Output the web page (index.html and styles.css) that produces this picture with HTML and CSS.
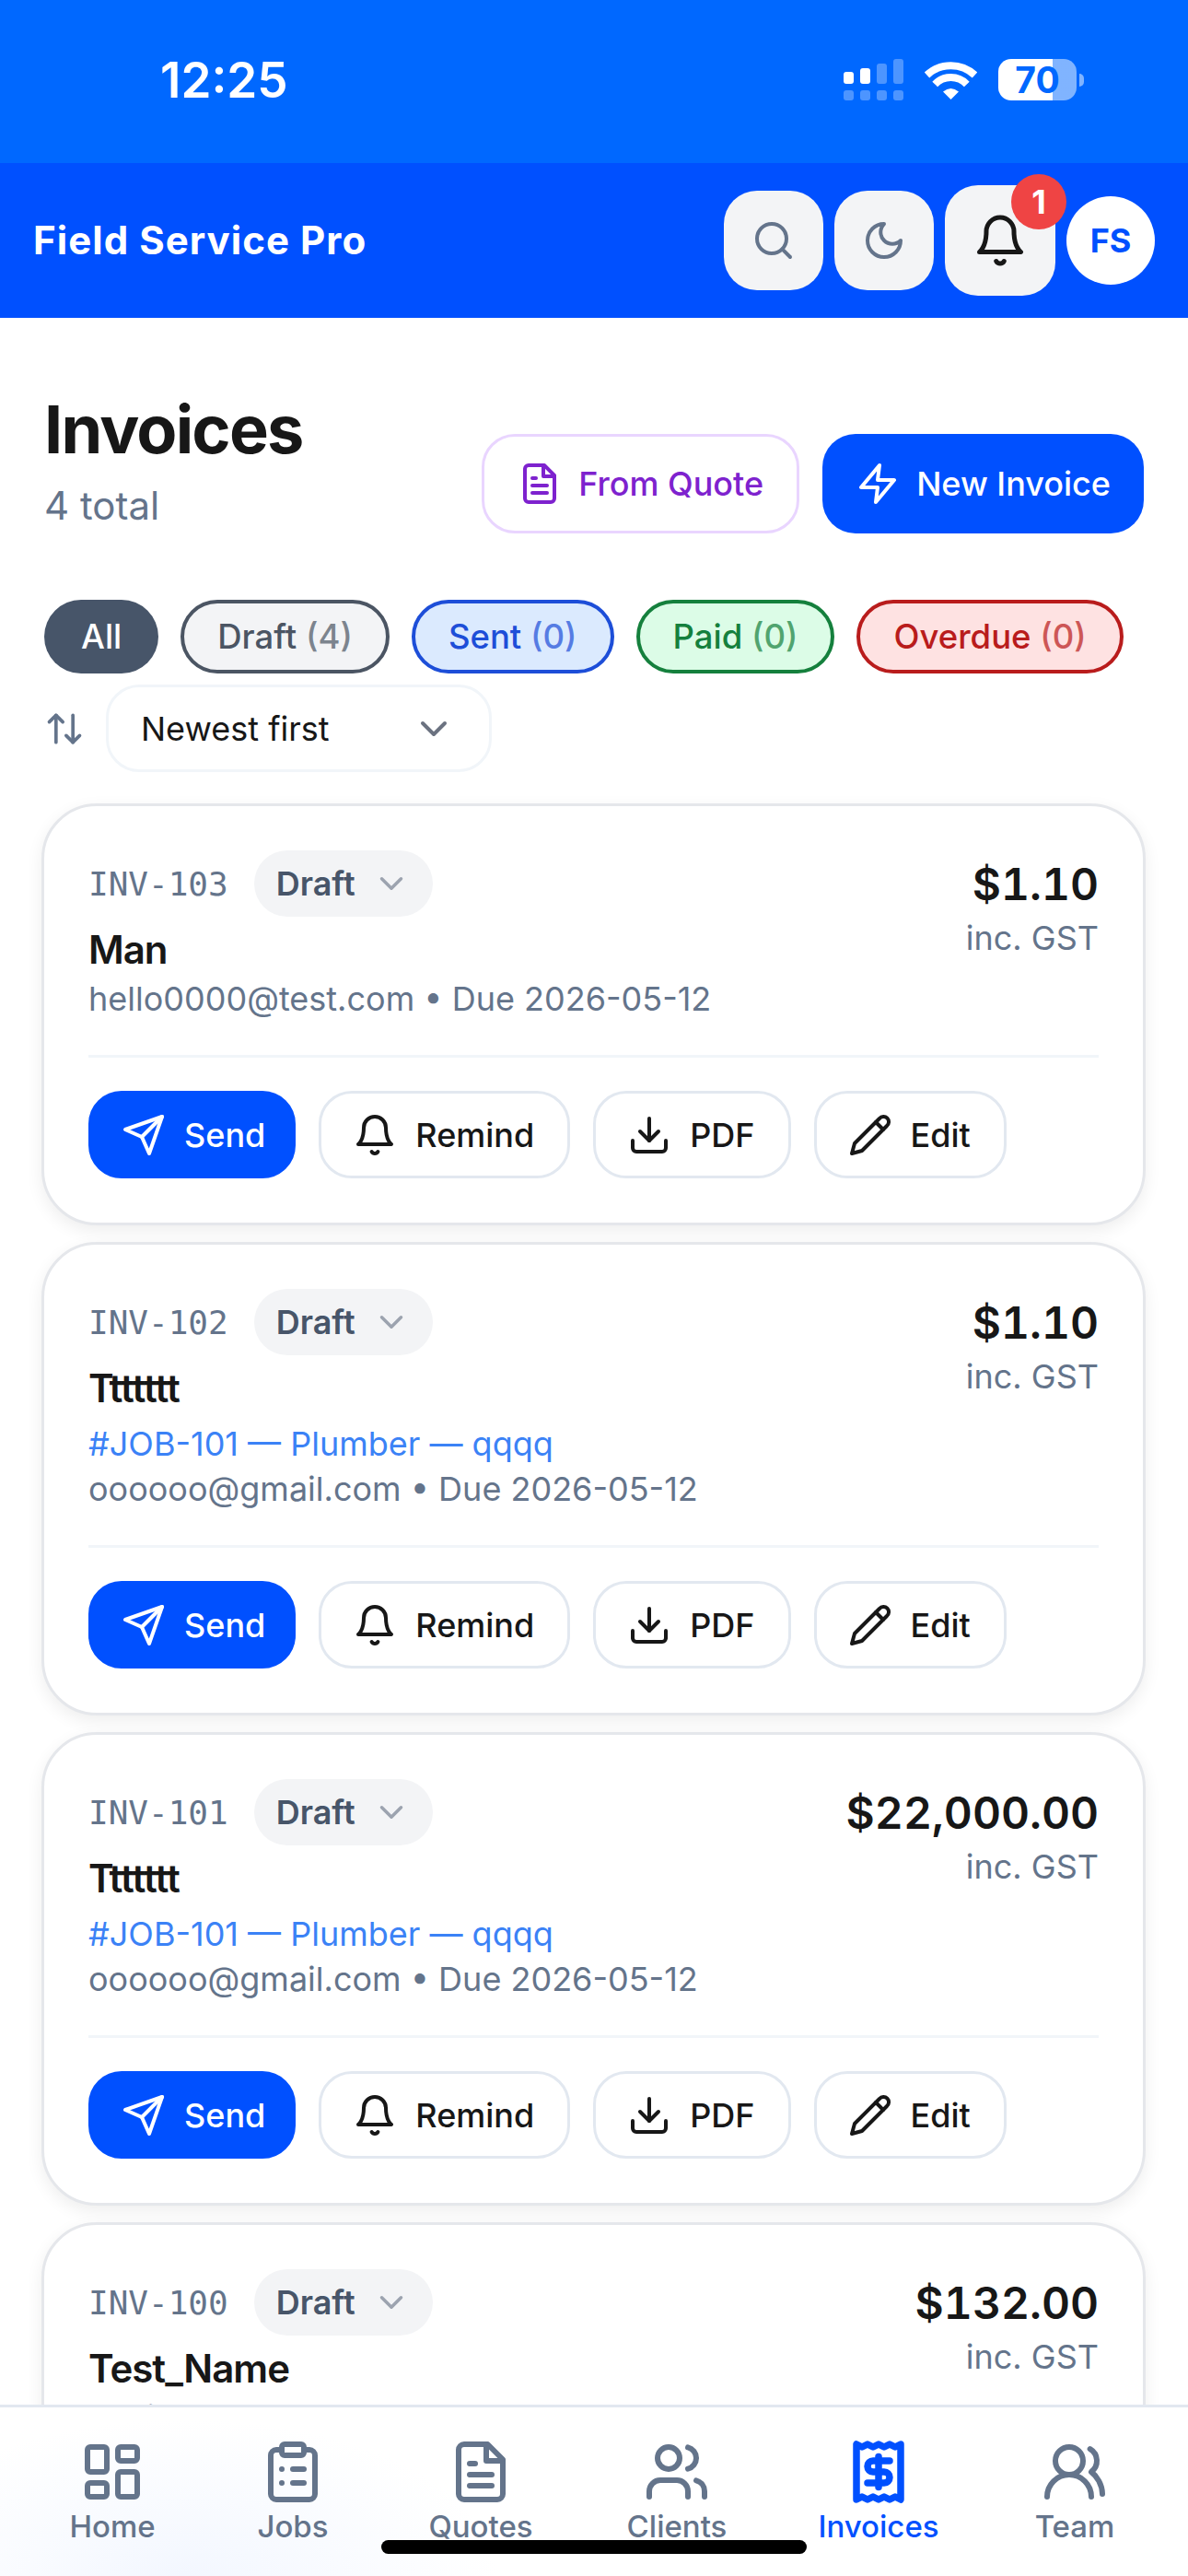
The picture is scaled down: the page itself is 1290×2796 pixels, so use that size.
FILE: index.html
```html
<!DOCTYPE html>
<html lang="en">
<head>
    <meta charset="UTF-8">
    <meta name="viewport" content="width=device-width, initial-scale=1.0">
    <link rel="stylesheet" href="styles.css">
    <title>Invoices - Field Service Pro</title>
</head>
<body>
    <svg class="sprite" xmlns="http://www.w3.org/2000/svg">
        <symbol id="i-search" viewBox="0 0 24 24"><circle cx="11" cy="11" r="8"/><path d="m21 21-4.3-4.3"/></symbol>
        <symbol id="i-moon" viewBox="0 0 24 24"><path d="M12 3a6 6 0 0 0 9 9 9 9 0 1 1-9-9Z"/></symbol>
        <symbol id="i-bell" viewBox="0 0 24 24"><path d="M6 8a6 6 0 0 1 12 0c0 7 3 9 3 9H3s3-2 3-9"/><path d="M10.3 21a1.94 1.94 0 0 0 3.4 0"/></symbol>
        <symbol id="i-file" viewBox="0 0 24 24"><path d="M14.5 2H6a2 2 0 0 0-2 2v16a2 2 0 0 0 2 2h12a2 2 0 0 0 2-2V7.5L14.5 2z"/><path d="M14 2v6h6"/><path d="M16 13H8"/><path d="M16 17H8"/><path d="M10 9H8"/></symbol>
        <symbol id="i-zap" viewBox="0 0 24 24"><path d="M13 2 3 14h9l-1 8 10-12h-9l1-8z"/></symbol>
        <symbol id="i-sort" viewBox="0 0 24 24"><path d="m21 16-4 4-4-4"/><path d="M17 20V4"/><path d="m3 8 4-4 4 4"/><path d="M7 4v16"/></symbol>
        <symbol id="i-chevron" viewBox="0 0 24 24"><path d="m6 9 6 6 6-6"/></symbol>
        <symbol id="i-send" viewBox="0 0 24 24"><path d="m22 2-7 20-4-9-9-4Z"/><path d="M22 2 11 13"/></symbol>
        <symbol id="i-download" viewBox="0 0 24 24"><path d="M21 15v4a2 2 0 0 1-2 2H5a2 2 0 0 1-2-2v-4"/><path d="m7 10 5 5 5-5"/><path d="M12 15V3"/></symbol>
        <symbol id="i-pencil" viewBox="0 0 24 24"><path d="M17 3a2.85 2.83 0 1 1 4 4L7.5 20.5 2 22l1.5-5.5Z"/><path d="m15 5 4 4"/></symbol>
        <symbol id="i-home" viewBox="0 0 24 24"><rect x="3" y="3" width="7" height="9" rx="1"/><rect x="14" y="3" width="7" height="5" rx="1"/><rect x="14" y="12" width="7" height="9" rx="1"/><rect x="3" y="16" width="7" height="5" rx="1"/></symbol>
        <symbol id="i-jobs" viewBox="0 0 24 24"><rect x="8" y="2" width="8" height="4" rx="1"/><path d="M16 4h2a2 2 0 0 1 2 2v14a2 2 0 0 1-2 2H6a2 2 0 0 1-2-2V6a2 2 0 0 1 2-2h2"/><path d="M12 11h4"/><path d="M12 16h4"/><path d="M8 11h.01"/><path d="M8 16h.01"/></symbol>
        <symbol id="i-clients" viewBox="0 0 24 24"><path d="M16 21v-2a4 4 0 0 0-4-4H6a4 4 0 0 0-4 4v2"/><circle cx="9" cy="7" r="4"/><path d="M22 21v-2a4 4 0 0 0-3-3.87"/><path d="M16 3.13a4 4 0 0 1 0 7.75"/></symbol>
        <symbol id="i-receipt" viewBox="0 0 24 24"><path d="M4 2v20l2-1 2 1 2-1 2 1 2-1 2 1 2-1 2 1V2l-2 1-2-1-2 1-2-1-2 1-2-1-2 1Z"/><path d="M16 8h-6a2 2 0 1 0 0 4h4a2 2 0 1 1 0 4H8"/><path d="M12 17.5v-11"/></symbol>
        <symbol id="i-team" viewBox="0 0 24 24"><path d="M18 21a8 8 0 0 0-16 0"/><circle cx="10" cy="8" r="5"/><path d="M22 20c0-3.37-2-6.5-4-8a5 5 0 0 0-.45-8.3"/></symbol>
    </svg>

    <div class="status-bar">
        <span class="time">12:25</span>
        <div class="status-icons">
            <svg class="signal" viewBox="0 0 65 45" width="65" height="45">
                <rect class="on" x="0" y="14" width="11" height="13" rx="3"/>
                <rect class="on" x="18" y="10" width="11" height="17" rx="3"/>
                <rect class="off" x="36" y="5" width="11" height="22" rx="3"/>
                <rect class="off" x="54" y="0" width="11" height="27" rx="3"/>
                <rect class="off" x="0" y="34" width="11" height="11" rx="3"/>
                <rect class="off" x="18" y="34" width="11" height="11" rx="3"/>
                <rect class="off" x="36" y="34" width="11" height="11" rx="3"/>
                <rect class="off" x="54" y="34" width="11" height="11" rx="3"/>
            </svg>
            <svg class="wifi" viewBox="0 0 57 42" width="57" height="42">
                <path d="M2.5 15.5a38 38 0 0 1 52 0"/>
                <path d="M11.2 25.4a24 24 0 0 1 34.6 0"/>
                <path class="dot" d="M28.5 42 20 33.5q8.5-7 17 0Z"/>
            </svg>
            <div class="battery"><span class="battery-level">70</span><span class="battery-nub"></span></div>
        </div>
    </div>

    <header class="app-header">
        <div class="app-name">Field Service Pro</div>
        <div class="header-actions">
            <button class="head-btn"><svg class="icon icon-48"><use href="#i-search"/></svg></button>
            <button class="head-btn"><svg class="icon icon-48"><use href="#i-moon"/></svg></button>
            <button class="head-btn bell-btn">
                <svg class="icon icon-60"><use href="#i-bell"/></svg>
                <span class="bell-count">1</span>
            </button>
            <div class="avatar">FS</div>
        </div>
    </header>

    <main class="content">
        <div class="page-head">
            <div class="page-title">
                <h1>Invoices</h1>
                <p>4 total</p>
            </div>
            <div class="page-actions">
                <button class="head-action from-quote"><svg class="icon icon-48"><use href="#i-file"/></svg>From Quote</button>
                <button class="head-action new-invoice"><svg class="icon icon-48"><use href="#i-zap"/></svg>New Invoice</button>
            </div>
        </div>

        <div class="filters">
            <span class="pill pill-all">All</span>
            <span class="pill pill-draft">Draft <em>(4)</em></span>
            <span class="pill pill-sent">Sent <em>(0)</em></span>
            <span class="pill pill-paid">Paid <em>(0)</em></span>
            <span class="pill pill-overdue">Overdue <em>(0)</em></span>
        </div>

        <div class="sort-row">
            <svg class="icon sort-icon"><use href="#i-sort"/></svg>
            <div class="sort-select">Newest first<svg class="icon icon-48"><use href="#i-chevron"/></svg></div>
        </div>

        <div class="card">
            <div class="card-top">
                <div>
                    <div class="id-row">
                        <span class="inv-id">INV-103</span>
                        <span class="status">Draft<svg class="icon icon-42"><use href="#i-chevron"/></svg></span>
                    </div>
                    <div class="client">Man</div>
                    <div class="meta">hello0000@test.com • Due 2026-05-12</div>
                </div>
                <div class="amount">
                    <div class="total">$1.10</div>
                    <div class="tax">inc. GST</div>
                </div>
            </div>
            <div class="card-actions">
                <button class="act act-send"><svg class="icon icon-48"><use href="#i-send"/></svg>Send</button>
                <button class="act"><svg class="icon icon-48"><use href="#i-bell"/></svg>Remind</button>
                <button class="act"><svg class="icon icon-48"><use href="#i-download"/></svg>PDF</button>
                <button class="act"><svg class="icon icon-48"><use href="#i-pencil"/></svg>Edit</button>
            </div>
        </div>

        <div class="card">
            <div class="card-top">
                <div>
                    <div class="id-row">
                        <span class="inv-id">INV-102</span>
                        <span class="status">Draft<svg class="icon icon-42"><use href="#i-chevron"/></svg></span>
                    </div>
                    <div class="client">Ttttttt</div>
                    <div class="job">#JOB-101 — Plumber — qqqq</div>
                    <div class="meta">oooooo@gmail.com • Due 2026-05-12</div>
                </div>
                <div class="amount">
                    <div class="total">$1.10</div>
                    <div class="tax">inc. GST</div>
                </div>
            </div>
            <div class="card-actions">
                <button class="act act-send"><svg class="icon icon-48"><use href="#i-send"/></svg>Send</button>
                <button class="act"><svg class="icon icon-48"><use href="#i-bell"/></svg>Remind</button>
                <button class="act"><svg class="icon icon-48"><use href="#i-download"/></svg>PDF</button>
                <button class="act"><svg class="icon icon-48"><use href="#i-pencil"/></svg>Edit</button>
            </div>
        </div>

        <div class="card">
            <div class="card-top">
                <div>
                    <div class="id-row">
                        <span class="inv-id">INV-101</span>
                        <span class="status">Draft<svg class="icon icon-42"><use href="#i-chevron"/></svg></span>
                    </div>
                    <div class="client">Ttttttt</div>
                    <div class="job">#JOB-101 — Plumber — qqqq</div>
                    <div class="meta">oooooo@gmail.com • Due 2026-05-12</div>
                </div>
                <div class="amount">
                    <div class="total">$22,000.00</div>
                    <div class="tax">inc. GST</div>
                </div>
            </div>
            <div class="card-actions">
                <button class="act act-send"><svg class="icon icon-48"><use href="#i-send"/></svg>Send</button>
                <button class="act"><svg class="icon icon-48"><use href="#i-bell"/></svg>Remind</button>
                <button class="act"><svg class="icon icon-48"><use href="#i-download"/></svg>PDF</button>
                <button class="act"><svg class="icon icon-48"><use href="#i-pencil"/></svg>Edit</button>
            </div>
        </div>

        <div class="card">
            <div class="card-top">
                <div>
                    <div class="id-row">
                        <span class="inv-id">INV-100</span>
                        <span class="status">Draft<svg class="icon icon-42"><use href="#i-chevron"/></svg></span>
                    </div>
                    <div class="client">Test_Name</div>
                    <div class="meta">testi@test.com • Due 2026-05-12</div>
                </div>
                <div class="amount">
                    <div class="total">$132.00</div>
                    <div class="tax">inc. GST</div>
                </div>
            </div>
        </div>
    </main>

    <nav class="bottom-nav">
        <a class="nav-item"><svg class="icon icon-72"><use href="#i-home"/></svg>Home</a>
        <a class="nav-item"><svg class="icon icon-72"><use href="#i-jobs"/></svg>Jobs</a>
        <a class="nav-item"><svg class="icon icon-72"><use href="#i-file"/></svg>Quotes</a>
        <a class="nav-item"><svg class="icon icon-72"><use href="#i-clients"/></svg>Clients</a>
        <a class="nav-item active"><svg class="icon icon-72"><use href="#i-receipt"/></svg>Invoices</a>
        <a class="nav-item"><svg class="icon icon-72"><use href="#i-team"/></svg>Team</a>
    </nav>
    <div class="home-indicator"></div>
</body>
</html>
```

FILE: styles.css
```css
* {
    box-sizing: border-box;
}

body {
    position: relative;
    display: flex;
    flex-direction: column;
    width: 1290px;
    height: 2796px;
    margin: 0;
    overflow: hidden;
    background: #fff;
    color: #171717;
    font-family: Inter, "Noto Sans", sans-serif;
}

button {
    font-family: inherit;
    cursor: pointer;
}

.sprite {
    display: none;
}

.icon {
    flex: none;
    fill: none;
    stroke: currentColor;
    stroke-width: 2;
    stroke-linecap: round;
    stroke-linejoin: round;
}

.icon-42 { width: 42px; height: 42px; }
.icon-48 { width: 48px; height: 48px; }
.icon-60 { width: 60px; height: 60px; }
.icon-72 { width: 72px; height: 72px; }

/* status bar */
.status-bar {
    flex: none;
    display: flex;
    justify-content: space-between;
    align-items: center;
    height: 177px;
    padding: 0 113px 0 174px;
    background: #0068ff;
    color: #fff;
}

.time {
    font-size: 53px;
    font-weight: 600;
    margin-top: -3px;
}

.status-icons {
    display: flex;
    align-items: center;
    gap: 23px;
    margin-top: -4px;
}

.signal .on { fill: #fff; }
.signal .off { fill: rgba(255, 255, 255, 0.3); }

.wifi path {
    fill: none;
    stroke: #fff;
    stroke-width: 8;
}

.wifi .dot {
    fill: #fff;
    stroke: none;
}

.battery {
    display: flex;
    align-items: center;
    gap: 3px;
}

.battery-level {
    width: 85px;
    height: 45px;
    border-radius: 14px;
    background: linear-gradient(90deg, #fff 70%, rgba(255, 255, 255, 0.5) 70%);
    color: #0068ff;
    font-size: 39px;
    font-weight: 700;
    line-height: 45px;
    text-align: center;
}

.battery-nub {
    width: 5px;
    height: 14px;
    border-radius: 0 5px 5px 0;
    background: rgba(255, 255, 255, 0.5);
}

/* app header */
.app-header {
    flex: none;
    display: flex;
    justify-content: space-between;
    align-items: center;
    height: 168px;
    padding: 0 36px;
    background: #0050ff;
}

.app-name {
    color: #fff;
    font-size: 42px;
    font-weight: 700;
    letter-spacing: 1.05px;
    margin-top: -2px;
}

.header-actions {
    display: flex;
    align-items: center;
    gap: 12px;
}

.head-btn {
    position: relative;
    display: flex;
    align-items: center;
    justify-content: center;
    width: 108px;
    height: 108px;
    padding: 0;
    border: none;
    border-radius: 36px;
    background: #f3f4f6;
    color: #64748b;
}

.bell-btn {
    width: 120px;
    height: 120px;
    color: #171717;
}

.bell-count {
    position: absolute;
    top: -12px;
    right: -12px;
    width: 60px;
    height: 60px;
    border-radius: 50%;
    background: #ef4444;
    color: #fff;
    font-size: 36px;
    font-weight: 700;
    line-height: 60px;
    text-align: center;
}

.avatar {
    width: 96px;
    height: 96px;
    border-radius: 50%;
    background: #fff;
    color: #0050ff;
    font-size: 36px;
    font-weight: 700;
    line-height: 96px;
    text-align: center;
}

/* main list */
.content {
    flex: 1;
    min-height: 0;
    overflow: hidden;
    padding: 81px 46px 0 45px;
}

.page-head {
    display: flex;
    justify-content: space-between;
    align-items: flex-end;
    padding: 0 2px 0 3px;
}

.page-title h1 {
    margin: 0 0 12px;
    font-size: 72px;
    font-weight: 700;
    line-height: 80px;
    letter-spacing: -1.8px;
}

.page-title p {
    margin: 0;
    color: #64748b;
    font-size: 42px;
    line-height: 61px;
}

.page-actions {
    display: flex;
    gap: 25px;
}

.head-action {
    display: flex;
    align-items: center;
    gap: 18px;
    height: 108px;
    padding: 0 36px;
    border: 3px solid #e9d5ff;
    border-radius: 36px;
    background: #fff;
    color: #7e22ce;
    font-size: 36px;
    font-weight: 500;
}

.new-invoice {
    border: none;
    background: #0050ff;
    color: #fff;
}

.filters {
    display: flex;
    gap: 24px;
    margin-top: 72px;
    padding-left: 3px;
}

.pill {
    height: 80px;
    padding: 0 36px;
    border: 4px solid transparent;
    border-radius: 40px;
    font-size: 36.5px;
    font-weight: 500;
    line-height: 72px;
}

.pill em {
    font-style: normal;
    opacity: 0.7;
}

.pill-all { background: #475569; color: #fff; }
.pill-draft { background: #f3f4f6; border-color: #4b5563; color: #4b5563; }
.pill-sent { background: #dbeafe; border-color: #1d4ed8; color: #1d4ed8; }
.pill-paid { background: #dcfce7; border-color: #15803d; color: #15803d; }
.pill-overdue { background: #fee2e2; border-color: #b91c1c; color: #b91c1c; }

.sort-row {
    display: flex;
    align-items: center;
    gap: 23px;
    margin-top: 12px;
    padding-left: 3px;
}

.sort-icon {
    width: 44px;
    height: 44px;
    color: #64748b;
}

.sort-select {
    display: flex;
    justify-content: space-between;
    align-items: center;
    width: 419px;
    height: 95px;
    padding: 0 36px 0 35px;
    border: 3px solid #f1f5f9;
    border-radius: 36px;
    font-size: 36px;
}

.sort-select .icon {
    color: #6b7280;
}

.card {
    margin-top: 18px;
    padding: 48px;
    border: 3px solid #e5e7eb;
    border-radius: 60px;
    background: #fff;
    box-shadow: 0 6px 18px rgba(0, 0, 0, 0.07);
}

.sort-row + .card {
    margin-top: 34px;
}

.card-top {
    display: flex;
    justify-content: space-between;
    align-items: flex-start;
    padding-bottom: 34px;
    border-bottom: 3px solid #f1f5f9;
}

.id-row {
    display: flex;
    align-items: center;
    gap: 28px;
}

.inv-id {
    color: #64748b;
    font-family: "DejaVu Sans Mono", monospace;
    font-size: 36px;
}

.status {
    display: flex;
    align-items: center;
    gap: 18px;
    height: 72px;
    padding: 0 24px;
    border-radius: 36px;
    background: #f3f4f6;
    color: #475569;
    font-size: 36px;
    font-weight: 600;
}

.status .icon {
    color: #9ca3af;
}

.client {
    margin-top: 9px;
    font-size: 42px;
    font-weight: 600;
    line-height: 53px;
    letter-spacing: -1px;
}

.job {
    margin: 14px 0 2px;
    color: #3b82f6;
    font-size: 36px;
    line-height: 40px;
}

.meta {
    color: #64748b;
    font-size: 36px;
    line-height: 54px;
}

.amount {
    padding-top: 2px;
    text-align: right;
}

.total {
    font-size: 48px;
    font-weight: 600;
    line-height: 70px;
    font-variant-numeric: tabular-nums;
}

.tax {
    color: #64748b;
    font-size: 36px;
    line-height: 46px;
}

.card-actions {
    display: flex;
    gap: 25px;
    margin-top: 36px;
}

.act {
    display: flex;
    align-items: center;
    gap: 20px;
    height: 95px;
    padding: 0 36px 0 34px;
    border: 3px solid #e2e8f0;
    border-radius: 36px;
    background: #fff;
    color: #171717;
    font-size: 36px;
    font-weight: 500;
}

.act-send {
    padding: 0 30px 0 33px;
    border-color: #0050ff;
    background: #0050ff;
    color: #fff;
}

/* bottom nav */
.bottom-nav {
    flex: none;
    display: grid;
    grid-template-columns: 196px 196px 212px 214px 224px 202px;
    height: 186px;
    padding: 34px 0 0 24px;
    border-top: 3px solid #e2e8f0;
    background: radial-gradient(ellipse 340px 170px at 200px 100%, #f3f7ff, #fff);
}

.nav-item {
    display: flex;
    flex-direction: column;
    align-items: center;
    color: #64748b;
    font-size: 33px;
    font-weight: 500;
    line-height: 46px;
}

.nav-item.active {
    color: #0050ff;
}

.nav-item.active .icon {
    stroke-width: 2.5;
}

.home-indicator {
    position: absolute;
    left: 414px;
    bottom: 24px;
    width: 462px;
    height: 15px;
    border-radius: 8px;
    background: #000;
}
```
